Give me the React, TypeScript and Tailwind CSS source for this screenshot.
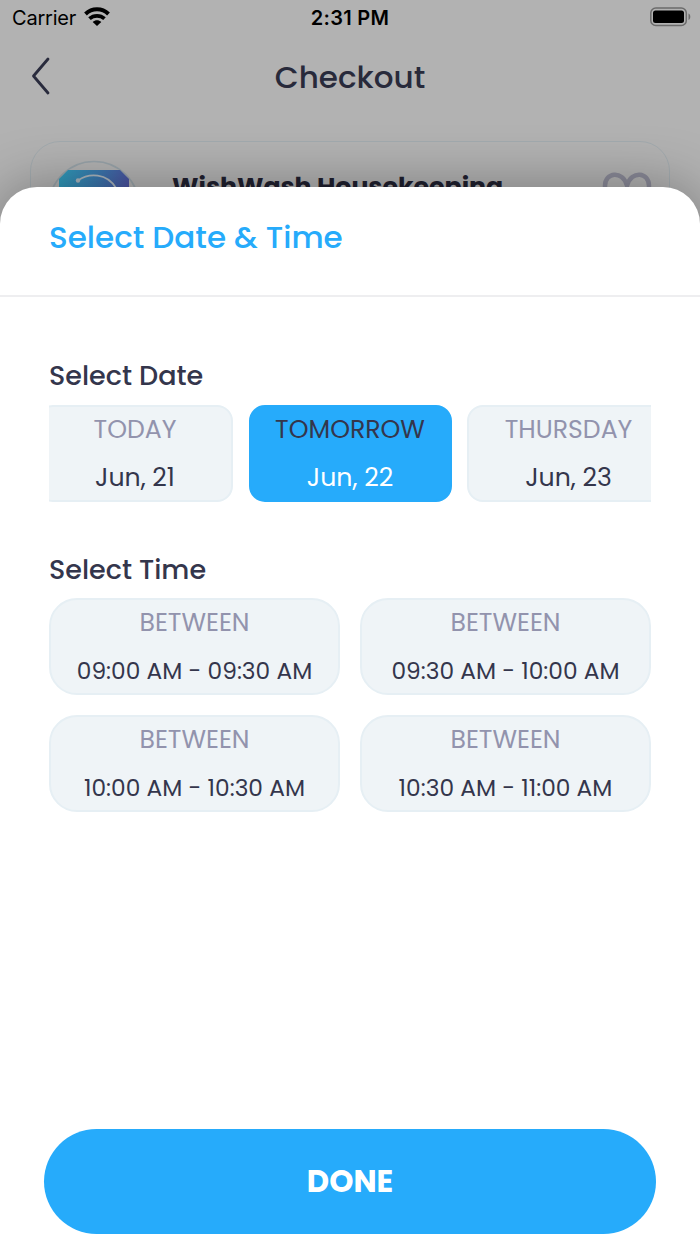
interface Slot {
  label: string;
  value: string;
}

interface DateOption {
  label: string;
  value: string;
  shape: string;
  selected?: boolean;
}

const dates: DateOption[] = [
  // first card is partly scrolled out on the left
  { label: "TODAY", value: "Jun, 21", shape: "-ml-3 w-[196px]" },
  { label: "TOMORROW", value: "Jun, 22", shape: "w-[203px]", selected: true },
  { label: "THURSDAY", value: "Jun, 23", shape: "w-[203px]" },
];

const slots: Slot[] = [
  { label: "BETWEEN", value: "09:00 AM - 09:30 AM" },
  { label: "BETWEEN", value: "09:30 AM - 10:00 AM" },
  { label: "BETWEEN", value: "10:00 AM - 10:30 AM" },
  { label: "BETWEEN", value: "10:30 AM - 11:00 AM" },
];

function StatusBar() {
  return (
    <div className="grid h-9 grid-cols-3 items-center font-['Inter',sans-serif] text-black">
      <div className="flex items-center pl-3">
        <span className="w-[72px] text-[20px] leading-9 tracking-[-0.2px]">Carrier</span>
        <svg width="26" height="20" viewBox="0 0 26 20" fill="none" className="-mt-0.5">
          <path d="M1.500 7C8 .8 18 .8 24.500 7" stroke="#000" strokeWidth="4" />
          <path d="M5.500 11.700C9.700 7.800 16.300 7.800 20.500 11.700" stroke="#000" strokeWidth="3.700" />
          <path d="M13 19L8.700 15C11.300 12.700 14.700 12.700 17.300 15Z" fill="#000" />
        </svg>
      </div>
      <span className="text-center text-[20px] font-semibold leading-9 tracking-[0.3px]">2:31 PM</span>
      <div className="flex justify-end pr-2">
        <svg width="42" height="20" viewBox="0 0 42 20" fill="none" className="-mt-0.5">
          <rect x=".8" y="1" width="35.500" height="17.500" rx="5" stroke="#6b6b6b" strokeWidth="1.500" />
          <rect x="3" y="3.500" width="31" height="12.500" rx="2.500" fill="#000" />
          <path d="M38.500 6.500v6.500c2.400-.8 2.400-5.700 0-6.500z" fill="#6b6b6b" />
        </svg>
      </div>
    </div>
  );
}

function ProviderCard() {
  return (
    <div className="mx-[30px] mt-[21px] flex h-[180px] rounded-[30px] border border-[#a2aaae] pl-[18px] pt-[18px]">
      <svg width="92" height="92" viewBox="0 0 92 92" fill="none" className="shrink-0">
        <defs>
          <linearGradient id="logo" x1="0" y1="0" x2="1" y2="0.3">
            <stop offset="0" stopColor="#2f9dbb" />
            <stop offset="0.55" stopColor="#3a76ad" />
            <stop offset="1" stopColor="#4d509f" />
          </linearGradient>
        </defs>
        <circle cx="45" cy="46.500" r="45" stroke="#98a3a9" strokeWidth="1.600" />
        <path d="M19 10H71L80 19V72L71 80H19L10 72V19Z" fill="url(#logo)" />
        <path d="M29 20.500C40 12.500 58 13 67 28" stroke="#aab5bd" strokeWidth="1.800" />
        <circle cx="29" cy="20.500" r="2.200" fill="#aab5bd" />
      </svg>
      <span className="ml-[31px] mt-[9px] text-[25.2px] font-bold leading-9 text-[#1f202f]">
        WishWash Housekeeping
      </span>
      <svg width="52" height="48" viewBox="0 0 52 48" fill="none" className="ml-auto mr-[16px] mt-[11px]">
        <path
          d="M26 14.500C21.500 -1 4 1 4 15C4 27 17 36 26 43C35 36 48 27 48 15C48 1 30.500 -1 26 14.500Z"
          stroke="#8a8a98"
          strokeWidth="4.500"
        />
      </svg>
    </div>
  );
}

function DateCard({ date }: { date: DateOption }) {
  return (
    <button
      className={`
        flex h-[97px] shrink-0 flex-col items-center
        rounded-2xl border-2 pt-[3px]
        ${date.shape}
        ${date.selected ? "border-[#26abfb] bg-[#26abfb]" : "border-[#e6eff4] bg-[#eff4f7]"}
      `}
    >
      <span
        className={`
          text-[25.2px] leading-10
          ${date.selected ? "text-[#34364c]" : "text-[#9293ad]"}
        `}
      >
        {date.label}
      </span>
      <span
        className={`
          mt-2 text-[25.2px] leading-10
          ${date.selected ? "text-white" : "text-[#34364c]"}
        `}
      >
        {date.value}
      </span>
    </button>
  );
}

function SlotCard({ slot }: { slot: Slot }) {
  return (
    <button className="flex h-[97px] flex-col items-center rounded-[28px] border-2 border-[#e6eff4] bg-[#eff4f7] pt-[3px]">
      <span className="text-[25.2px] leading-10 text-[#9293ad]">{slot.label}</span>
      <span className="mt-2 text-[23.3px] leading-10 whitespace-nowrap text-[#34364c]">
        {slot.value}
      </span>
    </button>
  );
}

export default function App() {
  return (
    <div className="relative h-[1244px] w-[700px] overflow-hidden bg-[#b2b2b2] font-['Poppins','Inter',sans-serif]">
      <StatusBar />

      {/* HEADER */}
      <header className="grid h-[84px] grid-cols-[1fr_auto_1fr] items-center">
        <svg width="20" height="38" viewBox="0 0 20 38" fill="none" className="-mt-1 ml-[31px]">
          <path
            d="M17 2L2.500 19L17 36"
            stroke="#292b3d"
            strokeWidth="2.800"
            strokeLinecap="round"
            strokeLinejoin="round"
          />
        </svg>
        <h1 className="-mt-0.5 text-[31px] font-medium text-[#282a3b]">Checkout</h1>
      </header>

      <ProviderCard />

      {/* BOTTOM SHEET */}
      <section className="absolute inset-x-0 bottom-0 top-[187px] flex flex-col rounded-t-[37px] bg-white shadow-[0_0_56px_rgba(0,0,0,0.34)]">
        <div className="flex h-[110px] items-center border-b-2 border-[#eeeef0] px-[49px] pb-2">
          <h2 className="text-[31px] font-medium text-[#26abfb]">Select Date &amp; Time</h2>
        </div>

        <div className="px-[49px] pt-[59px]">
          <h3 className="h-[49px] text-[27px] font-medium leading-10 text-[#34364c]">Select Date</h3>
          <div className="flex gap-[15.5px] overflow-hidden">
            {dates.map((date) => (
              <DateCard key={date.label} date={date} />
            ))}
          </div>

          <h3 className="mt-12 h-[48px] text-[27px] font-medium leading-10 text-[#34364c]">Select Time</h3>
          <div className="grid grid-cols-2 gap-5">
            {slots.map((slot) => (
              <SlotCard key={slot.value} slot={slot} />
            ))}
          </div>
        </div>

        <button className="mx-11 mb-[10px] mt-auto h-[105px] rounded-full bg-[#26abfb] pt-0.5 text-[30.8px] font-bold text-white">
          DONE
        </button>
      </section>
    </div>
  );
}
